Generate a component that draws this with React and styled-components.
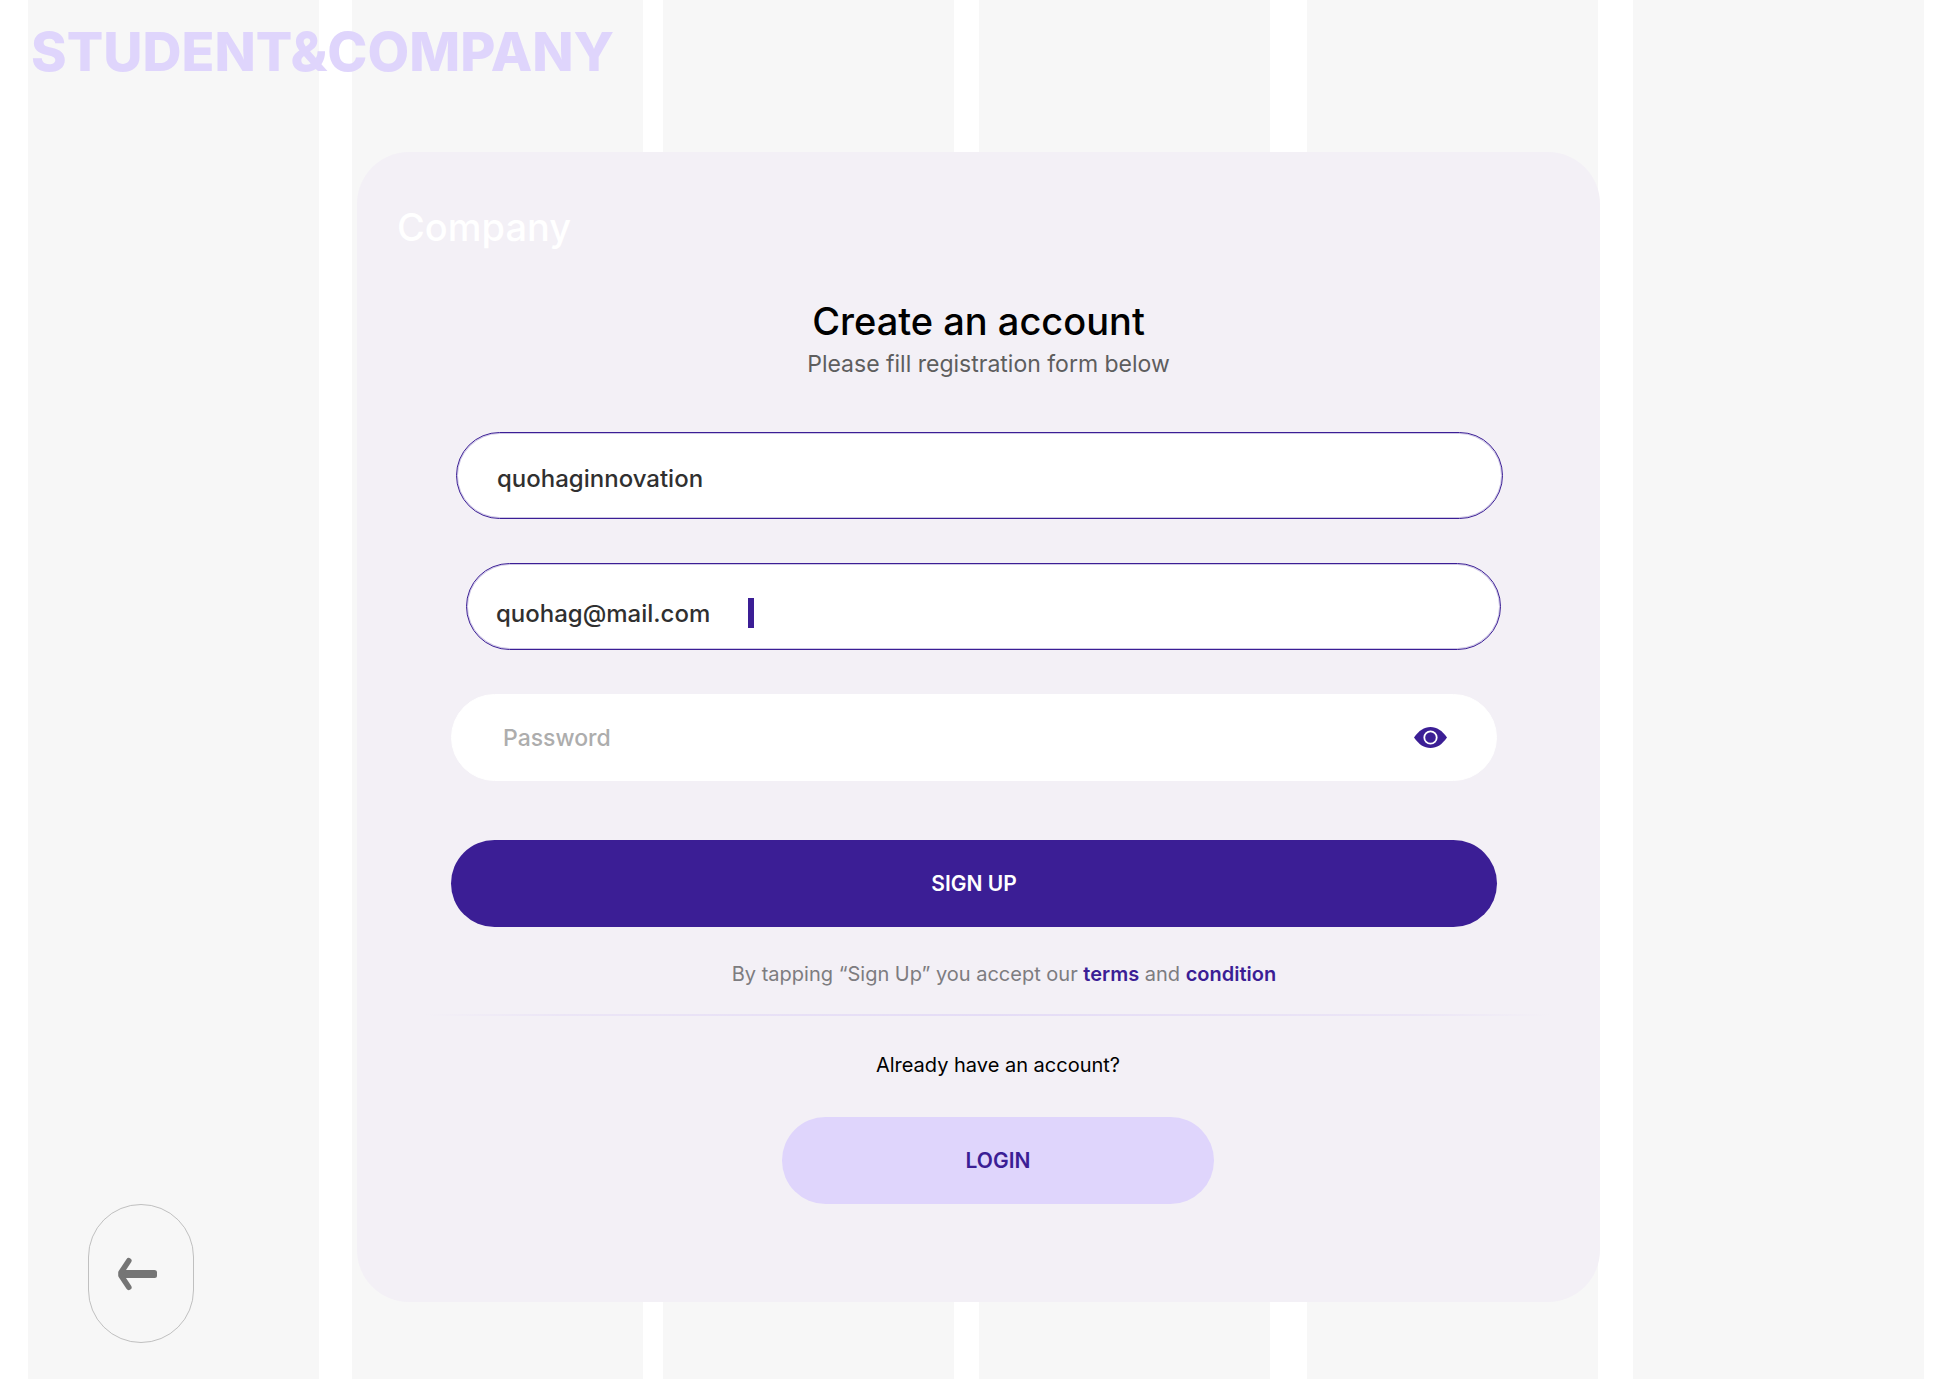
import React, { useState } from "react";
import styled, { createGlobalStyle } from "styled-components";

const color = {
  primary: "#3b1e95",
  lilac: "#dfd5fc",
  card: "#f3f0f6",
  stripe: "#f7f7f7",
  ink: "#303030",
};

const GlobalStyle = createGlobalStyle`
  *, *::before, *::after { box-sizing: border-box; }
  body {
    margin: 0;
    background: #fff;
    font-family: Inter, "Open Sans", sans-serif;
  }
`;

const Page = styled.div`
  display: grid;
  min-height: 100vh;
`;

const Stripes = styled.div`
  grid-area: 1 / 1;
  display: grid;
  grid-template-columns:
    28fr 291fr 33fr 291fr 20fr 291fr 25fr 291fr 37fr 291fr 35fr 291fr 23fr;
`;

const Stripe = styled.div`
  background: ${color.stripe};
  grid-column: ${(p) => p.$column};
`;

const Content = styled.div`
  grid-area: 1 / 1;
  display: flex;
  flex-direction: column;
`;

const Header = styled.header`
  padding: 20px 31px 0;
`;

const Brand = styled.h1`
  margin: 0;
  color: ${color.lilac};
  font-size: 54px;
  font-weight: 800;
  line-height: 64px;
`;

const Body = styled.div`
  flex: 1;
  display: grid;
  grid-template-columns: 357fr 1243fr 347fr;
  padding-top: 68px;
`;

const Side = styled.nav`
  display: flex;
  align-items: flex-end;
  padding: 0 0 36px 88px;
`;

const BackButton = styled.button`
  display: flex;
  align-items: center;
  width: 106px;
  height: 139px;
  padding: 0 0 0 29px;
  border: 1px solid #c0c0c0;
  border-radius: 53px;
  background: transparent;
  cursor: pointer;
`;

const Card = styled.main`
  margin-bottom: 77px;
  padding: 51px 0 97px;
  border-radius: 52px;
  background: ${color.card};
`;

const Role = styled.p`
  margin: 0;
  padding-left: 40px;
  color: #fff;
  font-size: 38px;
  font-weight: 500;
  line-height: 48px;
`;

const Title = styled.h2`
  margin: 46px 0 0;
  color: #000;
  font-size: 38px;
  font-weight: 500;
  line-height: 48px;
  text-align: center;
`;

const Subtitle = styled.p`
  margin: 3px 0 0;
  padding-left: 20px;
  color: #5e5e5e;
  font-size: 23px;
  line-height: 32px;
  text-align: center;
`;

const Form = styled.form`
  display: flex;
  flex-direction: column;
  gap: 44px;
  margin-top: 52px;
`;

const Field = styled.div`
  display: flex;
  align-items: center;
  height: 87px;
  margin: ${(p) => p.$margin};
  padding: ${(p) => p.$padding};
  border: 1px solid ${(p) => (p.$filled ? color.primary : "#fff")};
  border-radius: 44px;
  box-shadow: ${(p) => (p.$filled ? "inset 0 0 0 1px #cec7e5" : "none")};
  background: #fff;
`;

const Input = styled.input`
  flex: ${(p) => (p.$width ? "none" : "1")};
  width: ${(p) => p.$width || "auto"};
  min-width: 0;
  height: 40px;
  padding: 0;
  border: 0;
  outline: 0;
  background: transparent;
  color: ${color.ink};
  font-family: inherit;
  font-size: 24px;
  font-weight: 500;

  &::placeholder {
    color: #adadad;
    font-size: 23px;
    opacity: 1;
  }
`;

const Caret = styled.span`
  width: 6px;
  height: 30px;
  background: ${color.primary};
`;

const IconButton = styled.button`
  display: flex;
  padding: 0;
  border: 0;
  background: transparent;
  cursor: pointer;
`;

const PillButton = styled.button`
  height: 87px;
  padding: 0;
  border: 0;
  border-radius: 44px;
  background: ${(p) => (p.$soft ? color.lilac : color.primary)};
  color: ${(p) => (p.$soft ? color.primary : "#fff")};
  font-family: inherit;
  font-size: 21px;
  font-weight: 600;
  cursor: pointer;
`;

const SubmitButton = styled(PillButton)`
  margin: 15px 103px 0 94px;
`;

const Terms = styled.p`
  margin: 33px 0 0;
  padding-left: 51px;
  color: #7d7c80;
  font-size: 20px;
  line-height: 28px;
  text-align: center;
`;

const TermsLink = styled.a`
  color: ${color.primary};
  font-weight: 600;
  text-decoration: none;
`;

const Divider = styled.hr`
  height: 2px;
  margin: 26px 50px 0 68px;
  border: 0;
  background: linear-gradient(90deg, transparent, #ebe5f6 12%, #e4dcf6 50%, #ebe5f6 88%, transparent);
`;

const LoginBlock = styled.section`
  display: flex;
  flex-direction: column;
  align-items: center;
  gap: 38px;
  margin-top: 35px;
  padding-left: 39px;
`;

const Question = styled.p`
  margin: 0;
  color: #000;
  font-size: 20px;
  line-height: 28px;
`;

const LoginButton = styled(PillButton)`
  width: 432px;
`;

const ArrowIcon = () => (
  <svg width="40" height="34" viewBox="0 0 40 34" fill="none" aria-hidden="true">
    <rect x="4" y="13" width="35" height="8" rx="2.5" fill="#757575" />
    <path
      d="M10.8 3.8L3 15.5V18.5L10.8 30.2"
      stroke="#757575"
      strokeWidth="5.6"
      strokeLinecap="round"
      strokeLinejoin="round"
    />
  </svg>
);

const EyeIcon = () => (
  <svg width="33" height="21" viewBox="0 0 33 21" fill="none" aria-hidden="true">
    <path
      d="M0 10.5C5 3.5 10 0 16.5 0S28 3.5 33 10.5C28 17.5 23 21 16.5 21S5 17.5 0 10.5Z"
      fill={color.primary}
    />
    <circle cx="16.5" cy="10.5" r="6.2" stroke="#fff" strokeWidth="1.8" />
  </svg>
);

const stripeColumns = [2, 4, 6, 8, 10, 12];

export default function App() {
  const [visible, setVisible] = useState(false);

  return (
    <>
      <GlobalStyle />
      <Page>
        <Stripes aria-hidden="true">
          {stripeColumns.map((column) => (
            <Stripe key={column} $column={column} />
          ))}
        </Stripes>
        <Content>
          <Header>
            <Brand>STUDENT&amp;COMPANY</Brand>
          </Header>
          <Body>
            <Side>
              <BackButton type="button" aria-label="Back">
                <ArrowIcon />
              </BackButton>
            </Side>
            <Card>
              <Role>Company</Role>
              <Title>Create an account</Title>
              <Subtitle>Please fill registration form below</Subtitle>
              <Form onSubmit={(event) => event.preventDefault()}>
                <Field $filled $margin="0 97px 0 99px" $padding="5px 40px 0 40px">
                  <Input aria-label="Username" defaultValue="quohaginnovation" />
                </Field>
                <Field $filled $margin="0 99px 0 109px" $padding="13px 40px 0 29px">
                  <Input
                    type="email"
                    aria-label="Email"
                    defaultValue="quohag@mail.com"
                    $width="252px"
                  />
                  <Caret />
                </Field>
                <Field $margin="0 103px 0 94px" $padding="0 49px 0 51px">
                  <Input
                    type={visible ? "text" : "password"}
                    aria-label="Password"
                    placeholder="Password"
                  />
                  <IconButton
                    type="button"
                    aria-label="Show password"
                    onClick={() => setVisible(!visible)}
                  >
                    <EyeIcon />
                  </IconButton>
                </Field>
                <SubmitButton type="submit">SIGN UP</SubmitButton>
              </Form>
              <Terms>
                By tapping “Sign Up” you accept our <TermsLink href="#terms">terms</TermsLink> and{" "}
                <TermsLink href="#condition">condition</TermsLink>
              </Terms>
              <Divider />
              <LoginBlock>
                <Question>Already have an account?</Question>
                <LoginButton type="button" $soft>
                  LOGIN
                </LoginButton>
              </LoginBlock>
            </Card>
          </Body>
        </Content>
      </Page>
    </>
  );
}
